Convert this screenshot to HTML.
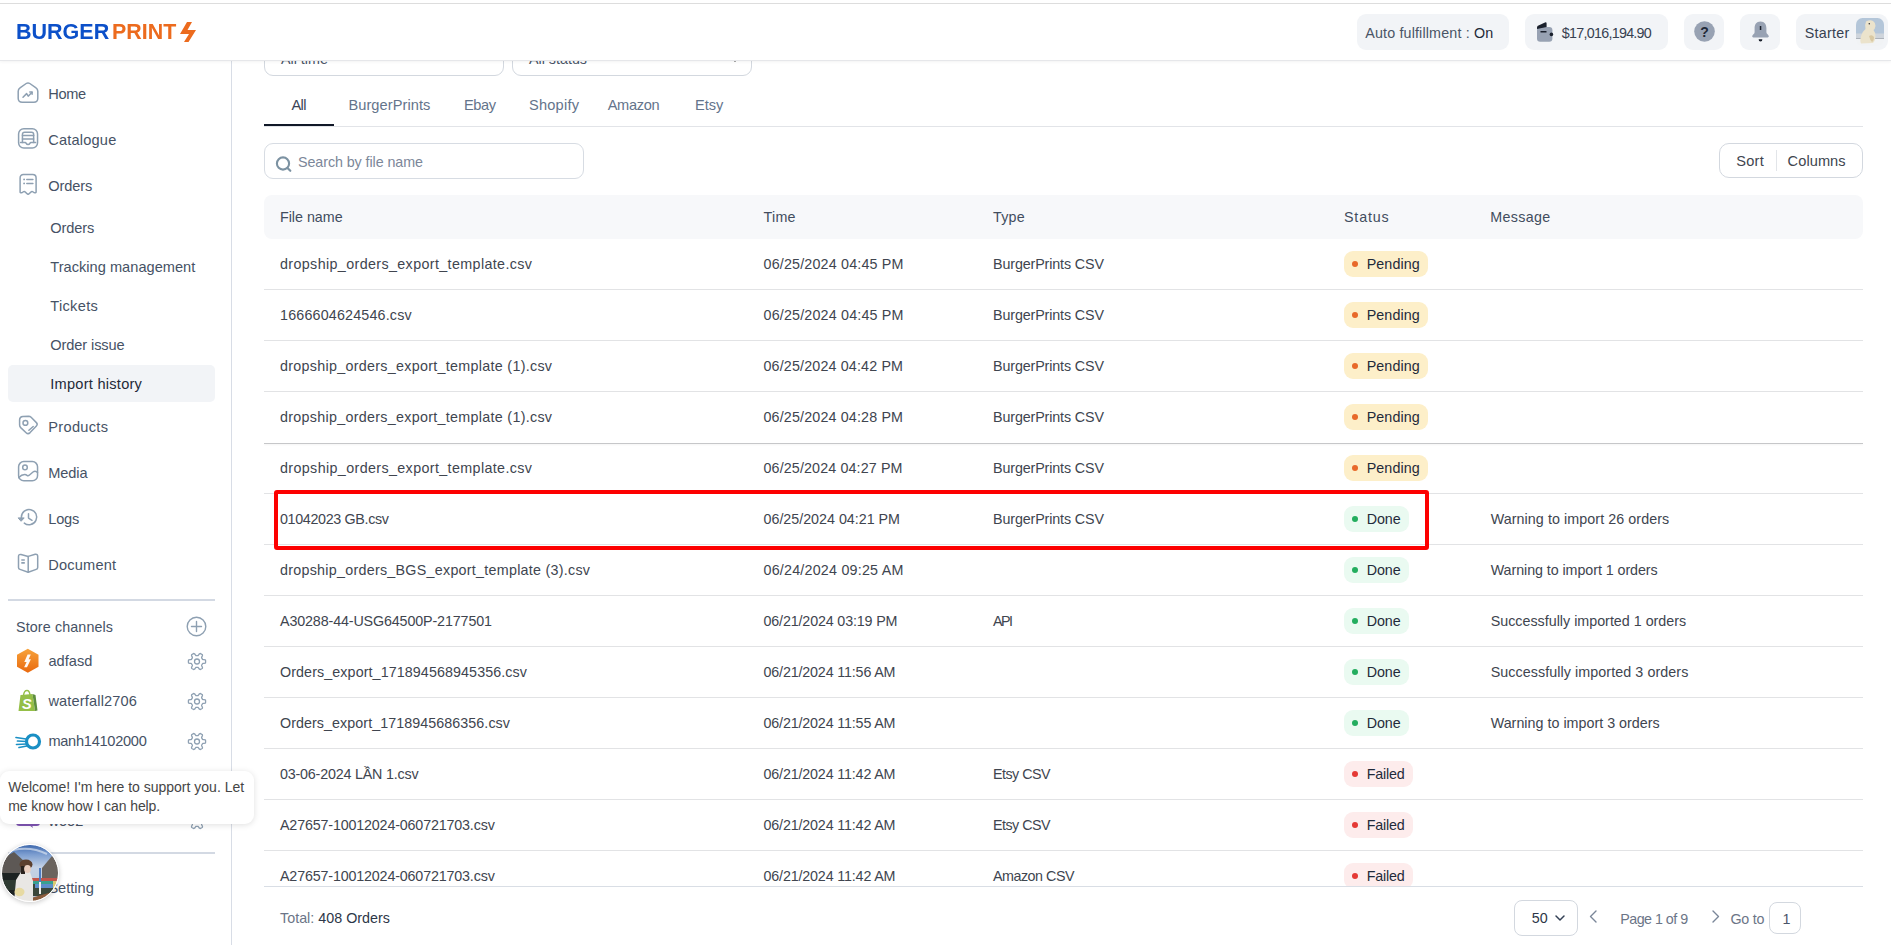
<!DOCTYPE html>
<html><head><meta charset="utf-8">
<style>
*{box-sizing:border-box;margin:0;padding:0}
html,body{width:1891px;height:945px;overflow:hidden;background:#fff;font-family:"Liberation Sans",sans-serif;font-size:14.3px;color:#334155}
.a{position:absolute;white-space:nowrap}
.t{position:absolute;white-space:nowrap;line-height:20px}
#topline{position:absolute;left:0;top:3px;width:1891px;height:1px;background:#dddddd;z-index:30}
#header{position:absolute;left:0;top:4px;width:1891px;height:57px;background:#fff;border-bottom:1px solid #e6e7ea;box-shadow:0 1px 3px rgba(0,0,0,0.05);z-index:10}
#header .t{z-index:1}
.pill{position:absolute;top:10px;height:36px;background:#f2f4f7;border-radius:9px}
#sidebar{position:absolute;left:0;top:0;width:231px;height:945px;background:#fff}
.badge{position:absolute;height:26px;border-radius:9px}
.badge i{position:absolute;left:8px;top:10px;width:6px;height:6px;border-radius:50%}
.pend{background:#fdefc9}
.pend i{background:#e8692a}
.done{background:#eafaf1}
.done i{background:#23ad5e}
.fail{background:#fdecec}
.fail i{background:#e53935}

</style></head><body>
<div id="topline"></div>
<div id="main">
<div class="a" style="left:264px;top:30px;width:240px;height:46px;border:1px solid #d3d8df;border-radius:9px"></div>
<div class="a" style="left:512px;top:30px;width:240px;height:46px;border:1px solid #d3d8df;border-radius:9px"></div>
<div class="t" style="left:281px;top:49.05px;font-size:14.3px;color:#4a5568">All time</div>
<div class="t" style="left:529px;top:49.05px;font-size:14.3px;color:#4a5568">All status</div>
<svg class="a" style="left:728px;top:52px" width="14" height="14" viewBox="0 0 14 14" fill="none" stroke="#555" stroke-width="1.5"><path d="M3 5 L7 9 L11 5"/></svg>
<div class="a" style="left:264px;top:126px;width:1599px;height:1px;background:#e2e4e8"></div>
<div class="a" style="left:264px;top:124px;width:70px;height:2px;background:#111827"></div>
<div class="t" style="left:291.4px;top:94.94px;font-size:14.6px;color:#3b4455;letter-spacing:-0.609px">All</div>
<div class="t" style="left:348.4px;top:94.94px;font-size:14.6px;color:#64748b;letter-spacing:0.081px">BurgerPrints</div>
<div class="t" style="left:464px;top:94.94px;font-size:14.6px;color:#64748b;letter-spacing:-0.422px">Ebay</div>
<div class="t" style="left:529px;top:94.94px;font-size:14.6px;color:#64748b;letter-spacing:0.219px">Shopify</div>
<div class="t" style="left:607.7px;top:94.94px;font-size:14.6px;color:#64748b;letter-spacing:-0.309px">Amazon</div>
<div class="t" style="left:695px;top:94.94px;font-size:14.6px;color:#64748b;letter-spacing:0.003px">Etsy</div>
<div class="a" style="left:264px;top:143px;width:320px;height:36px;border:1px solid #d7dce3;border-radius:9px"></div>
<svg class="a" style="left:275px;top:155px" width="18" height="18" viewBox="0 0 18 18"><circle cx="8" cy="8.5" r="6.1" fill="none" stroke="#7c92a2" stroke-width="2.1"/><path d="M12.5 13 L15.3 15.8" stroke="#7c92a2" stroke-width="2.2" stroke-linecap="round"/></svg>
<div class="t" style="left:298px;top:152.05px;font-size:14.3px;color:#7c8799;letter-spacing:-0.076px">Search by file name</div>
<div class="a" style="left:1719px;top:143px;width:144px;height:35px;border:1px solid #d3d8df;border-radius:10px"></div>
<div class="a" style="left:1776px;top:150px;width:1px;height:21px;background:#e2e5e9"></div>
<div class="t" style="left:1736.2px;top:150.94px;font-size:14.6px;color:#40454f;letter-spacing:0.278px">Sort</div>
<div class="t" style="left:1787.6px;top:150.94px;font-size:14.6px;color:#40454f;letter-spacing:0.068px">Columns</div>
<div class="a" style="left:264px;top:195px;width:1599px;height:44px;background:#f7f8fa;border-radius:8px"></div>
<div class="t" style="left:280px;top:207.05px;font-size:14.3px;color:#424d5e;letter-spacing:-0.023px">File name</div>
<div class="t" style="left:763.5px;top:207.05px;font-size:14.3px;color:#424d5e;letter-spacing:0.250px">Time</div>
<div class="t" style="left:993px;top:207.05px;font-size:14.3px;color:#424d5e;letter-spacing:0.200px">Type</div>
<div class="t" style="left:1344px;top:207.05px;font-size:14.3px;color:#424d5e;letter-spacing:0.814px">Status</div>
<div class="t" style="left:1490.2px;top:207.05px;font-size:14.3px;color:#424d5e;letter-spacing:0.331px">Message</div>
<div class="t" style="left:280px;top:254.05px;font-size:14.3px;color:#40454f;letter-spacing:0.376px">dropship_orders_export_template.csv</div>
<div class="t" style="left:763.5px;top:254.05px;font-size:14.3px;color:#40454f;letter-spacing:0.181px">06/25/2024 04:45 PM</div>
<div class="t" style="left:993px;top:254.05px;font-size:14.3px;color:#40454f;letter-spacing:-0.122px">BurgerPrints CSV</div>
<div class="badge pend" style="left:1344px;top:251px;width:84px"><i></i></div>
<div class="t" style="left:1366.7px;top:254.05px;font-size:14.3px;color:#1f2a3a;letter-spacing:0.089px">Pending</div>
<div class="a" style="left:264px;top:289px;width:1599px;height:1px;background:#e2e3e5"></div>
<div class="t" style="left:280px;top:305.05px;font-size:14.3px;color:#40454f;letter-spacing:0.181px">1666604624546.csv</div>
<div class="t" style="left:763.5px;top:305.05px;font-size:14.3px;color:#40454f;letter-spacing:0.181px">06/25/2024 04:45 PM</div>
<div class="t" style="left:993px;top:305.05px;font-size:14.3px;color:#40454f;letter-spacing:-0.122px">BurgerPrints CSV</div>
<div class="badge pend" style="left:1344px;top:302px;width:84px"><i></i></div>
<div class="t" style="left:1366.7px;top:305.05px;font-size:14.3px;color:#1f2a3a;letter-spacing:0.089px">Pending</div>
<div class="a" style="left:264px;top:340px;width:1599px;height:1px;background:#e2e3e5"></div>
<div class="t" style="left:280px;top:356.05px;font-size:14.3px;color:#40454f;letter-spacing:0.299px">dropship_orders_export_template (1).csv</div>
<div class="t" style="left:763.5px;top:356.05px;font-size:14.3px;color:#40454f;letter-spacing:0.154px">06/25/2024 04:42 PM</div>
<div class="t" style="left:993px;top:356.05px;font-size:14.3px;color:#40454f;letter-spacing:-0.122px">BurgerPrints CSV</div>
<div class="badge pend" style="left:1344px;top:353px;width:84px"><i></i></div>
<div class="t" style="left:1366.7px;top:356.05px;font-size:14.3px;color:#1f2a3a;letter-spacing:0.089px">Pending</div>
<div class="a" style="left:264px;top:391px;width:1599px;height:1px;background:#e2e3e5"></div>
<div class="t" style="left:280px;top:407.05px;font-size:14.3px;color:#40454f;letter-spacing:0.299px">dropship_orders_export_template (1).csv</div>
<div class="t" style="left:763.5px;top:407.05px;font-size:14.3px;color:#40454f;letter-spacing:0.154px">06/25/2024 04:28 PM</div>
<div class="t" style="left:993px;top:407.05px;font-size:14.3px;color:#40454f;letter-spacing:-0.122px">BurgerPrints CSV</div>
<div class="badge pend" style="left:1344px;top:404px;width:84px"><i></i></div>
<div class="t" style="left:1366.7px;top:407.05px;font-size:14.3px;color:#1f2a3a;letter-spacing:0.089px">Pending</div>
<div class="a" style="left:264px;top:443px;width:1599px;height:1px;background:#c6c7c9;box-shadow:0 1px 2px rgba(0,0,0,0.06)"></div>
<div class="t" style="left:280px;top:458.05px;font-size:14.3px;color:#40454f;letter-spacing:0.376px">dropship_orders_export_template.csv</div>
<div class="t" style="left:763.5px;top:458.05px;font-size:14.3px;color:#40454f;letter-spacing:0.126px">06/25/2024 04:27 PM</div>
<div class="t" style="left:993px;top:458.05px;font-size:14.3px;color:#40454f;letter-spacing:-0.122px">BurgerPrints CSV</div>
<div class="badge pend" style="left:1344px;top:455px;width:84px"><i></i></div>
<div class="t" style="left:1366.7px;top:458.05px;font-size:14.3px;color:#1f2a3a;letter-spacing:0.089px">Pending</div>
<div class="a" style="left:264px;top:493px;width:1599px;height:1px;background:#e2e3e5"></div>
<div class="t" style="left:280px;top:509.05px;font-size:14.3px;color:#40454f;letter-spacing:-0.333px">01042023 GB.csv</div>
<div class="t" style="left:763.5px;top:509.05px;font-size:14.3px;color:#40454f;letter-spacing:-0.013px">06/25/2024 04:21 PM</div>
<div class="t" style="left:993px;top:509.05px;font-size:14.3px;color:#40454f;letter-spacing:-0.122px">BurgerPrints CSV</div>
<div class="badge done" style="left:1344px;top:506px;width:65px"><i></i></div>
<div class="t" style="left:1366.7px;top:509.05px;font-size:14.3px;color:#1f2a3a;letter-spacing:-0.062px">Done</div>
<div class="t" style="left:1490.7px;top:509.05px;font-size:14.3px;color:#40454f;letter-spacing:0.070px">Warning to import 26 orders</div>
<div class="a" style="left:264px;top:544px;width:1599px;height:1px;background:#e2e3e5"></div>
<div class="t" style="left:280px;top:560.05px;font-size:14.3px;color:#40454f;letter-spacing:0.267px">dropship_orders_BGS_export_template (3).csv</div>
<div class="t" style="left:763.5px;top:560.05px;font-size:14.3px;color:#40454f;letter-spacing:0.215px">06/24/2024 09:25 AM</div>
<div class="badge done" style="left:1344px;top:557px;width:65px"><i></i></div>
<div class="t" style="left:1366.7px;top:560.05px;font-size:14.3px;color:#1f2a3a;letter-spacing:-0.062px">Done</div>
<div class="t" style="left:1490.7px;top:560.05px;font-size:14.3px;color:#40454f;letter-spacing:-0.069px">Warning to import 1 orders</div>
<div class="a" style="left:264px;top:595px;width:1599px;height:1px;background:#e2e3e5"></div>
<div class="t" style="left:280px;top:611.05px;font-size:14.3px;color:#40454f;letter-spacing:-0.132px">A30288-44-USG64500P-2177501</div>
<div class="t" style="left:763.5px;top:611.05px;font-size:14.3px;color:#40454f;letter-spacing:-0.152px">06/21/2024 03:19 PM</div>
<div class="t" style="left:993px;top:611.05px;font-size:14.3px;color:#40454f;letter-spacing:-1.523px">API</div>
<div class="badge done" style="left:1344px;top:608px;width:65px"><i></i></div>
<div class="t" style="left:1366.7px;top:611.05px;font-size:14.3px;color:#1f2a3a;letter-spacing:-0.062px">Done</div>
<div class="t" style="left:1490.7px;top:611.05px;font-size:14.3px;color:#40454f;letter-spacing:0.001px">Successfully imported 1 orders</div>
<div class="a" style="left:264px;top:646px;width:1599px;height:1px;background:#e2e3e5"></div>
<div class="t" style="left:280px;top:662.05px;font-size:14.3px;color:#40454f;letter-spacing:0.093px">Orders_export_171894568945356.csv</div>
<div class="t" style="left:763.5px;top:662.05px;font-size:14.3px;color:#40454f;letter-spacing:-0.160px">06/21/2024 11:56 AM</div>
<div class="badge done" style="left:1344px;top:659px;width:65px"><i></i></div>
<div class="t" style="left:1366.7px;top:662.05px;font-size:14.3px;color:#1f2a3a;letter-spacing:-0.062px">Done</div>
<div class="t" style="left:1490.7px;top:662.05px;font-size:14.3px;color:#40454f;letter-spacing:0.073px">Successfully imported 3 orders</div>
<div class="a" style="left:264px;top:697px;width:1599px;height:1px;background:#e2e3e5"></div>
<div class="t" style="left:280px;top:713.05px;font-size:14.3px;color:#40454f;letter-spacing:0.062px">Orders_export_1718945686356.csv</div>
<div class="t" style="left:763.5px;top:713.05px;font-size:14.3px;color:#40454f;letter-spacing:-0.160px">06/21/2024 11:55 AM</div>
<div class="badge done" style="left:1344px;top:710px;width:65px"><i></i></div>
<div class="t" style="left:1366.7px;top:713.05px;font-size:14.3px;color:#1f2a3a;letter-spacing:-0.062px">Done</div>
<div class="t" style="left:1490.7px;top:713.05px;font-size:14.3px;color:#40454f;letter-spacing:0.011px">Warning to import 3 orders</div>
<div class="a" style="left:264px;top:748px;width:1599px;height:1px;background:#e2e3e5"></div>
<div class="t" style="left:280px;top:764.05px;font-size:14.3px;color:#40454f;letter-spacing:-0.193px">03-06-2024 LẦN 1.csv</div>
<div class="t" style="left:763.5px;top:764.05px;font-size:14.3px;color:#40454f;letter-spacing:-0.160px">06/21/2024 11:42 AM</div>
<div class="t" style="left:993px;top:764.05px;font-size:14.3px;color:#40454f;letter-spacing:-0.512px">Etsy CSV</div>
<div class="badge fail" style="left:1344px;top:761px;width:69px"><i></i></div>
<div class="t" style="left:1366.7px;top:764.05px;font-size:14.3px;color:#1f2a3a;letter-spacing:-0.191px">Failed</div>
<div class="a" style="left:264px;top:799px;width:1599px;height:1px;background:#e2e3e5"></div>
<div class="t" style="left:280px;top:815.05px;font-size:14.3px;color:#40454f;letter-spacing:-0.165px">A27657-10012024-060721703.csv</div>
<div class="t" style="left:763.5px;top:815.05px;font-size:14.3px;color:#40454f;letter-spacing:-0.160px">06/21/2024 11:42 AM</div>
<div class="t" style="left:993px;top:815.05px;font-size:14.3px;color:#40454f;letter-spacing:-0.512px">Etsy CSV</div>
<div class="badge fail" style="left:1344px;top:812px;width:69px"><i></i></div>
<div class="t" style="left:1366.7px;top:815.05px;font-size:14.3px;color:#1f2a3a;letter-spacing:-0.191px">Failed</div>
<div class="a" style="left:264px;top:850px;width:1599px;height:1px;background:#e2e3e5"></div>
<div class="t" style="left:280px;top:866.05px;font-size:14.3px;color:#40454f;letter-spacing:-0.165px">A27657-10012024-060721703.csv</div>
<div class="t" style="left:763.5px;top:866.05px;font-size:14.3px;color:#40454f;letter-spacing:-0.160px">06/21/2024 11:42 AM</div>
<div class="t" style="left:993px;top:866.05px;font-size:14.3px;color:#40454f;letter-spacing:-0.481px">Amazon CSV</div>
<div class="badge fail" style="left:1344px;top:863px;width:69px"><i></i></div>
<div class="t" style="left:1366.7px;top:866.05px;font-size:14.3px;color:#1f2a3a;letter-spacing:-0.191px">Failed</div>
<div class="a" style="left:232px;top:887px;width:1659px;height:58px;background:#fff"></div>
<div class="a" style="left:264px;top:886px;width:1599px;height:1px;background:#d9dee5"></div>
<div class="t" style="left:280px;top:908.05px;font-size:14.3px;color:#6b7587;letter-spacing:0.020px">Total: <span style="color:#2d3748">408 Orders</span></div>
<div class="a" style="left:1514px;top:900px;width:64px;height:36px;border:1px solid #d3d8df;border-radius:8px"></div>
<div class="t" style="left:1531.7px;top:908.05px;font-size:14.3px;color:#2d3748;letter-spacing:0.094px">50</div>
<svg class="a" style="left:1554px;top:913px" width="12" height="10" viewBox="0 0 12 10" fill="none" stroke="#334155" stroke-width="1.5" stroke-linecap="round" stroke-linejoin="round"><path d="M2 3 L6 7 L10 3"/></svg>
<svg class="a" style="left:1587px;top:909px" width="12" height="16" viewBox="0 0 12 16" fill="none" stroke="#7a8699" stroke-width="1.4" stroke-linecap="round" stroke-linejoin="round"><path d="M9 2 L3.5 7.5 L9 13"/></svg>
<div class="t" style="left:1620.2px;top:908.55px;font-size:14.3px;color:#6b7587;letter-spacing:-0.514px">Page 1 of 9</div>
<svg class="a" style="left:1710px;top:909px" width="12" height="16" viewBox="0 0 12 16" fill="none" stroke="#7a8699" stroke-width="1.4" stroke-linecap="round" stroke-linejoin="round"><path d="M3 2 L8.5 7.5 L3 13"/></svg>
<div class="t" style="left:1730.4px;top:908.55px;font-size:14.3px;color:#6b7587;letter-spacing:-0.242px">Go to</div>
<div class="a" style="left:1769px;top:902px;width:32px;height:32px;border:1px solid #d3d8df;border-radius:8px"></div>
<div class="t" style="left:1782.5px;top:908.55px;font-size:14.3px;color:#4a5568">1</div>
<div class="a" style="left:274px;top:490px;width:1155px;height:60px;border:4px solid #fd0000;border-radius:3px;z-index:5"></div>
</div>
<div id="header">
<div class="a" style="left:15.5px;top:18px;height:20px;line-height:20px;font-weight:bold;font-size:22.3px;color:#0c50c9;transform-origin:0 0;transform:scaleX(0.965)">BURGER</div>
<div class="a" style="left:111.5px;top:18px;height:20px;line-height:20px;font-weight:bold;font-size:22.3px;color:#ec6b1e;transform-origin:0 0;transform:scaleX(0.96)">PRINT</div>
<svg class="a" style="left:0;top:-4px" width="200" height="60" viewBox="0 0 200 60"><polygon points="187,22 192,22 187.5,30 196,30 188.5,42 184,42 189,34 180,34" fill="#ec6b1e"/></svg>
<div class="pill" style="left:1357px;width:152px"></div>
<div class="t" style="left:1365.2px;top:19.05px;font-size:14.3px;color:#4a5466;letter-spacing:0.162px">Auto fulfillment : <span style="color:#1f2937">On</span></div>
<div class="pill" style="left:1525px;width:143px"></div>
<svg class="a" style="left:1536px;top:17px" width="19" height="22" viewBox="0 0 19 22"><rect x="1" y="6" width="15.4" height="14.8" rx="3.2" fill="#98a2b3"/><path d="M1 8 L1 6.5 Q1 4.8 3 4.2 L9 1.4 Q10.6 0.9 10.6 2.5 L10.6 6 Z" fill="#1a202c"/><rect x="4.5" y="10" width="6" height="1.5" fill="#1a202c"/><circle cx="15.4" cy="13.4" r="1.8" fill="#1a202c"/></svg>
<div class="t" style="left:1561.8px;top:19.05px;font-size:14.3px;color:#374151;letter-spacing:-0.722px">$17,016,194.90</div>
<div class="pill" style="left:1684px;width:40px"></div>
<svg class="a" style="left:1694px;top:17px" width="21" height="21" viewBox="0 0 21 21"><circle cx="10.5" cy="10.5" r="10.3" fill="#98a2b3"/><text x="10.5" y="15.5" text-anchor="middle" font-family="Liberation Sans" font-weight="bold" font-size="14" fill="#1f2937">?</text></svg>
<div class="pill" style="left:1740px;width:40px"></div>
<svg class="a" style="left:1750px;top:16px" width="21" height="24" viewBox="0 0 21 24"><path d="M10.5 1.4 C6.3 1.4 4.6 4.6 4.6 8.2 L4.6 12.2 C4.6 14 2.2 14.6 2.2 16.2 C2.2 16.9 2.7 17.4 3.4 17.4 L17.6 17.4 C18.3 17.4 18.8 16.9 18.8 16.2 C18.8 14.6 16.4 14 16.4 12.2 L16.4 8.2 C16.4 4.6 14.7 1.4 10.5 1.4 Z" fill="#98a2b3"/><rect x="9.8" y="6" width="1.5" height="4" fill="#1a202c"/><path d="M8.6 19.3 L12.4 19.3 Q12.4 21.5 10.5 21.5 Q8.6 21.5 8.6 19.3 Z" fill="#1a202c"/></svg>
<div class="pill" style="left:1796px;width:92px"></div>
<div class="t" style="left:1804.8px;top:19.05px;font-size:14.3px;color:#374151;letter-spacing:0.249px">Starter</div>
<svg class="a" style="left:1856px;top:14px" width="28" height="28" viewBox="0 0 28 28"><defs><clipPath id="avh"><rect x="0" y="0" width="28" height="28" rx="6.5"/></clipPath><filter id="bl"><feGaussianBlur stdDeviation="0.6"/></filter></defs><g clip-path="url(#avh)"><rect width="28" height="16" fill="#b4c6d9"/><rect y="15.5" width="28" height="6" fill="#cfd5dc"/><rect y="20" width="28" height="1" fill="#8a9098" opacity="0.5"/><rect y="21" width="28" height="7" fill="#f1f3f5"/><g filter="url(#bl)"><path d="M10 3.5 Q14 1.5 17 3 Q19.5 4.5 19.5 8 Q19 11 17.5 12 Q20 15 19.5 19 Q19 23 17 25 L5 25.5 Q3.5 22 5.5 17 Q7 13 9.5 11 Q8.5 7 10 3.5 Z" fill="#ebe3cc"/><path d="M13 18 Q16 16 18 19 Q18 23 16 24 Q14 22 13 18 Z" fill="#d9c9a3"/></g><circle cx="13.3" cy="5.7" r="0.8" fill="#333"/></g></svg>
</div>
<div id="sidebar">
<div class="a" style="left:231px;top:61px;width:1px;height:884px;background:#d8dde6"></div>
<svg class="a" style="left:16px;top:81px" width="24" height="23" viewBox="0 0 24 23" fill="none" stroke="#8ea0b2" stroke-width="1.5" stroke-linecap="round" stroke-linejoin="round"><path d="M2.2 10.2 Q2.2 8.1 4 6.9 L10.2 2.5 Q12 1.3 13.8 2.5 L20 6.9 Q21.8 8.1 21.8 10.2 L21.8 17.3 Q21.8 21.3 17.8 21.3 L6.2 21.3 Q2.2 21.3 2.2 17.3 Z"/><path d="M7 16.2 L10.6 12.6 L12.2 15.2 L16 11.2"/><path d="M13.8 11 L16.1 11 L16.1 13.3"/></svg><div class="t" style="left:48.3px;top:83.94px;font-size:14.6px;color:#465265;letter-spacing:-0.379px">Home</div>
<svg class="a" style="left:16px;top:127px" width="24" height="23" viewBox="0 0 24 23" fill="none" stroke="#8ea0b2" stroke-width="1.5" stroke-linecap="round" stroke-linejoin="round"><rect x="2.6" y="1.75" width="18.95" height="19.2" rx="5.2"/><path d="M6.45 15.5 V7.3 Q6.45 5.15 8.6 5.15 H15.5 Q17.65 5.15 17.65 7.3 V15.5"/><path d="M6.45 8.4 H17.65 M6.45 11.9 H17.65"/><path d="M4.5 15.5 H9.1 Q9.8 15.5 10.2 16.3 Q10.8 17.5 12.05 17.5 Q13.3 17.5 13.9 16.3 Q14.3 15.5 15 15.5 H19.6"/></svg><div class="t" style="left:48.3px;top:129.94px;font-size:14.6px;color:#465265;letter-spacing:0.182px">Catalogue</div>
<svg class="a" style="left:17px;top:173px" width="22" height="22" viewBox="0 0 22 22" fill="none" stroke="#8ea0b2" stroke-width="1.5" stroke-linecap="round" stroke-linejoin="round"><path d="M3.1 19.3 V5 Q3.1 1.6 6.5 1.6 H15.7 Q19.1 1.6 19.1 5 V19.3 Q17.6 20.3 16.2 19 Q14.9 17.9 13.7 19.2 L12.4 20.6 Q11.1 22 9.8 20.6 L8.5 19.2 Q7.3 17.9 6 19 Q4.6 20.3 3.1 19.3 Z"/><path d="M9.8 6.4 H15.9 M9.8 10.4 H15.9"/><path d="M7.1 6.4 L7.11 6.4 M7.1 10.4 L7.11 10.4" stroke-width="1.9"/></svg><div class="t" style="left:48.3px;top:175.94px;font-size:14.6px;color:#465265;letter-spacing:-0.122px">Orders</div>
<div class="t" style="left:50.3px;top:217.94px;font-size:14.6px;color:#465265;letter-spacing:-0.122px">Orders</div>
<div class="t" style="left:50.3px;top:256.94px;font-size:14.6px;color:#465265;letter-spacing:0.019px">Tracking management</div>
<div class="t" style="left:50.3px;top:295.94px;font-size:14.6px;color:#465265;letter-spacing:0.302px">Tickets</div>
<div class="t" style="left:50.3px;top:334.94px;font-size:14.6px;color:#465265;letter-spacing:-0.104px">Order issue</div>
<div class="a" style="left:8px;top:365px;width:207px;height:37px;background:#f2f4f7;border-radius:5px"></div>
<div class="t" style="left:50.3px;top:373.94px;font-size:14.6px;color:#1f2937;letter-spacing:0.246px">Import history</div>
<svg class="a" style="left:16px;top:414px" width="24" height="23" viewBox="0 0 24 23" fill="none" stroke="#8ea0b2" stroke-width="1.5" stroke-linecap="round" stroke-linejoin="round"><path d="M3.6 5.8 Q3.6 2.6 6.8 2.4 L12.6 2.2 Q14.1 2.2 15.1 3.2 L20.4 8.6 Q22 10.3 20.4 12 L14.1 18.6 Q12.1 20.6 10.1 18.7 L4.7 13.6 Q3.6 12.5 3.6 11 Z"/><circle cx="9.4" cy="8.9" r="2.4"/><path d="M12.9 16.2 L17.2 12.5"/></svg><div class="t" style="left:48.3px;top:416.94px;font-size:14.6px;color:#465265;letter-spacing:0.301px">Products</div>
<svg class="a" style="left:16px;top:460px" width="24" height="23" viewBox="0 0 24 23" fill="none" stroke="#8ea0b2" stroke-width="1.5" stroke-linecap="round" stroke-linejoin="round"><rect x="2.6" y="1.6" width="18.95" height="19.25" rx="5.2"/><circle cx="9" cy="7.4" r="2.3"/><path d="M2.8 17.6 Q5.6 14.5 8.7 14.5 Q10 14.5 11 15.3 Q12.1 16.2 13.5 15 L17 12 Q19.4 10.3 21.5 12.6"/></svg><div class="t" style="left:48.3px;top:462.94px;font-size:14.6px;color:#465265;letter-spacing:-0.113px">Media</div>
<svg class="a" style="left:16px;top:506px" width="24" height="23" viewBox="0 0 24 23" fill="none" stroke="#8ea0b2" stroke-width="1.5" stroke-linecap="round" stroke-linejoin="round"><path d="M5.4 12.3 L5.4 11.05 A7.65 7.65 0 1 1 8.3 17.1"/><path d="M2.5 11.9 L8.2 11.9 L5.35 15 Z" fill="#8ea0b2" stroke-width="1"/><path d="M12.5 7.7 L12.5 12.1 L16 14.3"/></svg><div class="t" style="left:48.3px;top:508.94px;font-size:14.6px;color:#465265;letter-spacing:-0.219px">Logs</div>
<svg class="a" style="left:16px;top:552px" width="24" height="23" viewBox="0 0 24 23" fill="none" stroke="#8ea0b2" stroke-width="1.5" stroke-linecap="round" stroke-linejoin="round"><path d="M12.2 4.4 L5 2.5 Q2.5 2 2.5 4.5 L2.5 15.4 Q2.5 17 4 17.4 L12.2 20.3 L20.2 17.4 Q21.7 17 21.7 15.4 L21.7 4.3 Q21.7 1.8 19.2 2.3 Z"/><path d="M12.2 4.4 L12.2 20.3"/><path d="M5.3 8 L8.8 8 M5.3 10.9 L8.8 10.9" stroke-width="1.7" stroke-linecap="butt"/></svg><div class="t" style="left:48.3px;top:554.94px;font-size:14.6px;color:#465265;letter-spacing:0.183px">Document</div>
<div class="a" style="left:8px;top:599px;width:207px;height:2px;background:#d3d9e3"></div>
<div class="t" style="left:16px;top:616.55px;font-size:14.3px;color:#465265;letter-spacing:0.125px">Store channels</div>
<svg class="a" style="left:185px;top:615px" width="24" height="24" viewBox="0 0 24 24" fill="none" stroke="#8ea0b2" stroke-width="1.4" stroke-linecap="round" stroke-linejoin="round"><circle cx="11.5" cy="11.5" r="9.3"/><path d="M11.5 6.5 L11.5 16.5 M6.5 11.5 L16.5 11.5"/></svg>
<svg class="a" style="left:16px;top:648px" width="24" height="26" viewBox="0 0 24 26"><defs><linearGradient id="og" x1="0" y1="0" x2="0" y2="1"><stop offset="0" stop-color="#f7a23a"/><stop offset="1" stop-color="#e9690e"/></linearGradient></defs><path d="M11.8 0.8 L22.5 6.8 L22.5 18.8 L11.8 24.8 L1 18.8 L1 6.8 Z" fill="url(#og)"/><path d="M11.6 6.6 L14.8 6.6 L12.6 11.3 L14.9 11.3 L11 19.2 L8.1 19.2 L10.6 13.9 L8.3 13.9 Z" fill="#fff" opacity="0.95"/></svg><div class="t" style="left:48.4px;top:651.44px;font-size:14.6px;color:#465265;letter-spacing:0.034px">adfasd</div><svg class="a" style="left:184px;top:651.2px" width="26" height="21" viewBox="0 0 26 21" fill="none" stroke="#8ea0b2" stroke-width="1.3" stroke-linecap="round" stroke-linejoin="round"><path d="M21.60 10.50 L21.59 10.95 L21.55 11.40 L21.49 11.85 L20.99 12.20 L20.00 12.38 L19.02 12.46 L18.51 12.61 L18.39 12.90 L18.26 13.18 L18.11 13.45 L17.95 13.71 L17.77 13.97 L17.59 14.21 L17.71 14.74 L18.13 15.63 L18.47 16.57 L18.41 17.18 L18.05 17.46 L17.68 17.71 L17.30 17.95 L16.90 18.16 L16.50 18.36 L16.08 18.53 L15.52 18.27 L14.88 17.50 L14.32 16.69 L13.92 16.33 L13.62 16.37 L13.31 16.39 L13.00 16.40 L12.69 16.39 L12.38 16.37 L12.08 16.33 L11.68 16.69 L11.12 17.50 L10.48 18.27 L9.92 18.53 L9.50 18.36 L9.10 18.16 L8.70 17.95 L8.32 17.71 L7.95 17.46 L7.59 17.18 L7.53 16.57 L7.87 15.63 L8.29 14.74 L8.41 14.21 L8.23 13.97 L8.05 13.71 L7.89 13.45 L7.74 13.18 L7.61 12.90 L7.49 12.61 L6.98 12.46 L6.00 12.38 L5.01 12.20 L4.51 11.85 L4.45 11.40 L4.41 10.95 L4.40 10.50 L4.41 10.05 L4.45 9.60 L4.51 9.15 L5.01 8.80 L6.00 8.62 L6.98 8.54 L7.49 8.39 L7.61 8.10 L7.74 7.82 L7.89 7.55 L8.05 7.29 L8.23 7.03 L8.41 6.79 L8.29 6.26 L7.87 5.37 L7.53 4.43 L7.59 3.82 L7.95 3.54 L8.32 3.29 L8.70 3.05 L9.10 2.84 L9.50 2.64 L9.92 2.47 L10.48 2.73 L11.12 3.50 L11.68 4.31 L12.08 4.67 L12.38 4.63 L12.69 4.61 L13.00 4.60 L13.31 4.61 L13.62 4.63 L13.92 4.67 L14.32 4.31 L14.88 3.50 L15.52 2.73 L16.08 2.47 L16.50 2.64 L16.90 2.84 L17.30 3.05 L17.68 3.29 L18.05 3.54 L18.41 3.82 L18.47 4.43 L18.13 5.37 L17.71 6.26 L17.59 6.79 L17.77 7.03 L17.95 7.29 L18.11 7.55 L18.26 7.82 L18.39 8.10 L18.51 8.39 L19.02 8.54 L20.00 8.62 L20.99 8.80 L21.49 9.15 L21.55 9.60 L21.59 10.05 Z"/><circle cx="13" cy="10.5" r="2.5"/></svg>
<svg class="a" style="left:16px;top:689px" width="24" height="24" viewBox="0 0 24 24"><path d="M4.5 6 L16.5 5 L19 22 L2.5 22 Z" fill="#95bf47"/><path d="M16.5 5 L19.5 6 L21.5 21.5 L19 22 Z" fill="#5e8e3e"/><path d="M7.5 6.5 Q8 1.5 11 1.5 Q13.5 1.5 14 6" fill="none" stroke="#95bf47" stroke-width="1.4"/><text x="10.8" y="19.5" text-anchor="middle" font-family="Liberation Sans" font-weight="bold" font-style="italic" font-size="14.5" fill="#fff">S</text></svg><div class="t" style="left:48.4px;top:691.44px;font-size:14.6px;color:#465265;letter-spacing:0.149px">waterfall2706</div><svg class="a" style="left:184px;top:691.2px" width="26" height="21" viewBox="0 0 26 21" fill="none" stroke="#8ea0b2" stroke-width="1.3" stroke-linecap="round" stroke-linejoin="round"><path d="M21.60 10.50 L21.59 10.95 L21.55 11.40 L21.49 11.85 L20.99 12.20 L20.00 12.38 L19.02 12.46 L18.51 12.61 L18.39 12.90 L18.26 13.18 L18.11 13.45 L17.95 13.71 L17.77 13.97 L17.59 14.21 L17.71 14.74 L18.13 15.63 L18.47 16.57 L18.41 17.18 L18.05 17.46 L17.68 17.71 L17.30 17.95 L16.90 18.16 L16.50 18.36 L16.08 18.53 L15.52 18.27 L14.88 17.50 L14.32 16.69 L13.92 16.33 L13.62 16.37 L13.31 16.39 L13.00 16.40 L12.69 16.39 L12.38 16.37 L12.08 16.33 L11.68 16.69 L11.12 17.50 L10.48 18.27 L9.92 18.53 L9.50 18.36 L9.10 18.16 L8.70 17.95 L8.32 17.71 L7.95 17.46 L7.59 17.18 L7.53 16.57 L7.87 15.63 L8.29 14.74 L8.41 14.21 L8.23 13.97 L8.05 13.71 L7.89 13.45 L7.74 13.18 L7.61 12.90 L7.49 12.61 L6.98 12.46 L6.00 12.38 L5.01 12.20 L4.51 11.85 L4.45 11.40 L4.41 10.95 L4.40 10.50 L4.41 10.05 L4.45 9.60 L4.51 9.15 L5.01 8.80 L6.00 8.62 L6.98 8.54 L7.49 8.39 L7.61 8.10 L7.74 7.82 L7.89 7.55 L8.05 7.29 L8.23 7.03 L8.41 6.79 L8.29 6.26 L7.87 5.37 L7.53 4.43 L7.59 3.82 L7.95 3.54 L8.32 3.29 L8.70 3.05 L9.10 2.84 L9.50 2.64 L9.92 2.47 L10.48 2.73 L11.12 3.50 L11.68 4.31 L12.08 4.67 L12.38 4.63 L12.69 4.61 L13.00 4.60 L13.31 4.61 L13.62 4.63 L13.92 4.67 L14.32 4.31 L14.88 3.50 L15.52 2.73 L16.08 2.47 L16.50 2.64 L16.90 2.84 L17.30 3.05 L17.68 3.29 L18.05 3.54 L18.41 3.82 L18.47 4.43 L18.13 5.37 L17.71 6.26 L17.59 6.79 L17.77 7.03 L17.95 7.29 L18.11 7.55 L18.26 7.82 L18.39 8.10 L18.51 8.39 L19.02 8.54 L20.00 8.62 L20.99 8.80 L21.49 9.15 L21.55 9.60 L21.59 10.05 Z"/><circle cx="13" cy="10.5" r="2.5"/></svg>
<svg class="a" style="left:14px;top:731px" width="28" height="22" viewBox="0 0 28 22"><circle cx="19" cy="10.5" r="6.5" fill="none" stroke="#1a8fc4" stroke-width="3.2"/><path d="M2 6.5 L12 8 M3.5 10 L12.5 10.5 M2.5 13.5 L12.5 13 M5 16.5 L13 15" stroke="#1a8fc4" stroke-width="1.7" stroke-linecap="round"/></svg><div class="t" style="left:48.4px;top:731.44px;font-size:14.6px;color:#465265;letter-spacing:-0.276px">manh14102000</div><svg class="a" style="left:184px;top:731.2px" width="26" height="21" viewBox="0 0 26 21" fill="none" stroke="#8ea0b2" stroke-width="1.3" stroke-linecap="round" stroke-linejoin="round"><path d="M21.60 10.50 L21.59 10.95 L21.55 11.40 L21.49 11.85 L20.99 12.20 L20.00 12.38 L19.02 12.46 L18.51 12.61 L18.39 12.90 L18.26 13.18 L18.11 13.45 L17.95 13.71 L17.77 13.97 L17.59 14.21 L17.71 14.74 L18.13 15.63 L18.47 16.57 L18.41 17.18 L18.05 17.46 L17.68 17.71 L17.30 17.95 L16.90 18.16 L16.50 18.36 L16.08 18.53 L15.52 18.27 L14.88 17.50 L14.32 16.69 L13.92 16.33 L13.62 16.37 L13.31 16.39 L13.00 16.40 L12.69 16.39 L12.38 16.37 L12.08 16.33 L11.68 16.69 L11.12 17.50 L10.48 18.27 L9.92 18.53 L9.50 18.36 L9.10 18.16 L8.70 17.95 L8.32 17.71 L7.95 17.46 L7.59 17.18 L7.53 16.57 L7.87 15.63 L8.29 14.74 L8.41 14.21 L8.23 13.97 L8.05 13.71 L7.89 13.45 L7.74 13.18 L7.61 12.90 L7.49 12.61 L6.98 12.46 L6.00 12.38 L5.01 12.20 L4.51 11.85 L4.45 11.40 L4.41 10.95 L4.40 10.50 L4.41 10.05 L4.45 9.60 L4.51 9.15 L5.01 8.80 L6.00 8.62 L6.98 8.54 L7.49 8.39 L7.61 8.10 L7.74 7.82 L7.89 7.55 L8.05 7.29 L8.23 7.03 L8.41 6.79 L8.29 6.26 L7.87 5.37 L7.53 4.43 L7.59 3.82 L7.95 3.54 L8.32 3.29 L8.70 3.05 L9.10 2.84 L9.50 2.64 L9.92 2.47 L10.48 2.73 L11.12 3.50 L11.68 4.31 L12.08 4.67 L12.38 4.63 L12.69 4.61 L13.00 4.60 L13.31 4.61 L13.62 4.63 L13.92 4.67 L14.32 4.31 L14.88 3.50 L15.52 2.73 L16.08 2.47 L16.50 2.64 L16.90 2.84 L17.30 3.05 L17.68 3.29 L18.05 3.54 L18.41 3.82 L18.47 4.43 L18.13 5.37 L17.71 6.26 L17.59 6.79 L17.77 7.03 L17.95 7.29 L18.11 7.55 L18.26 7.82 L18.39 8.10 L18.51 8.39 L19.02 8.54 L20.00 8.62 L20.99 8.80 L21.49 9.15 L21.55 9.60 L21.59 10.05 Z"/><circle cx="13" cy="10.5" r="2.5"/></svg>
<svg class="a" style="left:15px;top:812px" width="26" height="16" viewBox="0 0 26 16"><rect x="1" y="1" width="24" height="13" rx="3.5" fill="#7f54b3"/><path d="M14 13 L18 16 L17 13 Z" fill="#7f54b3"/></svg>
<div class="t" style="left:48.4px;top:810.94px;font-size:14.6px;color:#465265">woo2</div><svg class="a" style="left:184px;top:810.2px" width="26" height="21" viewBox="0 0 26 21" fill="none" stroke="#8ea0b2" stroke-width="1.3" stroke-linecap="round" stroke-linejoin="round"><path d="M21.60 10.50 L21.59 10.95 L21.55 11.40 L21.49 11.85 L20.99 12.20 L20.00 12.38 L19.02 12.46 L18.51 12.61 L18.39 12.90 L18.26 13.18 L18.11 13.45 L17.95 13.71 L17.77 13.97 L17.59 14.21 L17.71 14.74 L18.13 15.63 L18.47 16.57 L18.41 17.18 L18.05 17.46 L17.68 17.71 L17.30 17.95 L16.90 18.16 L16.50 18.36 L16.08 18.53 L15.52 18.27 L14.88 17.50 L14.32 16.69 L13.92 16.33 L13.62 16.37 L13.31 16.39 L13.00 16.40 L12.69 16.39 L12.38 16.37 L12.08 16.33 L11.68 16.69 L11.12 17.50 L10.48 18.27 L9.92 18.53 L9.50 18.36 L9.10 18.16 L8.70 17.95 L8.32 17.71 L7.95 17.46 L7.59 17.18 L7.53 16.57 L7.87 15.63 L8.29 14.74 L8.41 14.21 L8.23 13.97 L8.05 13.71 L7.89 13.45 L7.74 13.18 L7.61 12.90 L7.49 12.61 L6.98 12.46 L6.00 12.38 L5.01 12.20 L4.51 11.85 L4.45 11.40 L4.41 10.95 L4.40 10.50 L4.41 10.05 L4.45 9.60 L4.51 9.15 L5.01 8.80 L6.00 8.62 L6.98 8.54 L7.49 8.39 L7.61 8.10 L7.74 7.82 L7.89 7.55 L8.05 7.29 L8.23 7.03 L8.41 6.79 L8.29 6.26 L7.87 5.37 L7.53 4.43 L7.59 3.82 L7.95 3.54 L8.32 3.29 L8.70 3.05 L9.10 2.84 L9.50 2.64 L9.92 2.47 L10.48 2.73 L11.12 3.50 L11.68 4.31 L12.08 4.67 L12.38 4.63 L12.69 4.61 L13.00 4.60 L13.31 4.61 L13.62 4.63 L13.92 4.67 L14.32 4.31 L14.88 3.50 L15.52 2.73 L16.08 2.47 L16.50 2.64 L16.90 2.84 L17.30 3.05 L17.68 3.29 L18.05 3.54 L18.41 3.82 L18.47 4.43 L18.13 5.37 L17.71 6.26 L17.59 6.79 L17.77 7.03 L17.95 7.29 L18.11 7.55 L18.26 7.82 L18.39 8.10 L18.51 8.39 L19.02 8.54 L20.00 8.62 L20.99 8.80 L21.49 9.15 L21.55 9.60 L21.59 10.05 Z"/><circle cx="13" cy="10.5" r="2.5"/></svg>
<div class="a" style="left:8px;top:852px;width:207px;height:2px;background:#d3d9e3"></div>
<svg class="a" style="left:16px;top:877px" width="24" height="23" viewBox="0 0 24 23" fill="none" stroke="#8ea0b2" stroke-width="1.4" stroke-linecap="round" stroke-linejoin="round"><path d="M21.60 10.50 L21.59 10.95 L21.55 11.40 L21.49 11.85 L20.99 12.20 L20.00 12.38 L19.02 12.46 L18.51 12.61 L18.39 12.90 L18.26 13.18 L18.11 13.45 L17.95 13.71 L17.77 13.97 L17.59 14.21 L17.71 14.74 L18.13 15.63 L18.47 16.57 L18.41 17.18 L18.05 17.46 L17.68 17.71 L17.30 17.95 L16.90 18.16 L16.50 18.36 L16.08 18.53 L15.52 18.27 L14.88 17.50 L14.32 16.69 L13.92 16.33 L13.62 16.37 L13.31 16.39 L13.00 16.40 L12.69 16.39 L12.38 16.37 L12.08 16.33 L11.68 16.69 L11.12 17.50 L10.48 18.27 L9.92 18.53 L9.50 18.36 L9.10 18.16 L8.70 17.95 L8.32 17.71 L7.95 17.46 L7.59 17.18 L7.53 16.57 L7.87 15.63 L8.29 14.74 L8.41 14.21 L8.23 13.97 L8.05 13.71 L7.89 13.45 L7.74 13.18 L7.61 12.90 L7.49 12.61 L6.98 12.46 L6.00 12.38 L5.01 12.20 L4.51 11.85 L4.45 11.40 L4.41 10.95 L4.40 10.50 L4.41 10.05 L4.45 9.60 L4.51 9.15 L5.01 8.80 L6.00 8.62 L6.98 8.54 L7.49 8.39 L7.61 8.10 L7.74 7.82 L7.89 7.55 L8.05 7.29 L8.23 7.03 L8.41 6.79 L8.29 6.26 L7.87 5.37 L7.53 4.43 L7.59 3.82 L7.95 3.54 L8.32 3.29 L8.70 3.05 L9.10 2.84 L9.50 2.64 L9.92 2.47 L10.48 2.73 L11.12 3.50 L11.68 4.31 L12.08 4.67 L12.38 4.63 L12.69 4.61 L13.00 4.60 L13.31 4.61 L13.62 4.63 L13.92 4.67 L14.32 4.31 L14.88 3.50 L15.52 2.73 L16.08 2.47 L16.50 2.64 L16.90 2.84 L17.30 3.05 L17.68 3.29 L18.05 3.54 L18.41 3.82 L18.47 4.43 L18.13 5.37 L17.71 6.26 L17.59 6.79 L17.77 7.03 L17.95 7.29 L18.11 7.55 L18.26 7.82 L18.39 8.10 L18.51 8.39 L19.02 8.54 L20.00 8.62 L20.99 8.80 L21.49 9.15 L21.55 9.60 L21.59 10.05 Z"/><circle cx="13" cy="10.5" r="2.5"/></svg>
<div class="t" style="left:48.4px;top:877.94px;font-size:14.6px;color:#465265;letter-spacing:-0.006px">Setting</div>
<div class="a" style="left:0px;top:771px;width:254px;height:53px;background:#fff;border-radius:9px;box-shadow:0 1px 6px rgba(0,0,0,0.13);z-index:20"></div>
<div class="t" style="left:8.2px;top:777.15px;font-size:14px;color:#454545;z-index:21;letter-spacing:0.003px">Welcome! I'm here to support you. Let</div>
<div class="t" style="left:8.2px;top:795.65px;font-size:14px;color:#454545;z-index:21;letter-spacing:-0.095px">me know how I can help.</div>
<div class="a" style="left:1px;top:844px;width:58px;height:58px;border-radius:50%;z-index:22;box-shadow:0 1px 5px rgba(0,0,0,0.22);background:#fff"></div>
<svg class="a" style="left:1px;top:844px;z-index:23" width="58" height="58" viewBox="0 0 58 58"><defs><clipPath id="avc"><circle cx="29" cy="29" r="28.3"/></clipPath><linearGradient id="sky" x1="0" y1="0" x2="0" y2="1"><stop offset="0" stop-color="#3a64aa"/><stop offset="0.18" stop-color="#7b9dd0"/><stop offset="0.4" stop-color="#c4d2e6"/><stop offset="1" stop-color="#b9c6d8"/></linearGradient><filter id="avb"><feGaussianBlur stdDeviation="0.5"/></filter></defs>
<g clip-path="url(#avc)"><g filter="url(#avb)">
<rect x="0" y="0" width="58" height="58" fill="url(#sky)"/>
<path d="M12 6 Q30 2 46 10" stroke="#e8eef6" stroke-width="2" fill="none" opacity="0.6"/>
<polygon points="0,15 13,8 23,17 23,30 0,31" fill="#5d5954"/>
<rect x="0" y="29" width="21" height="29" fill="#1e2320"/>
<rect x="2" y="36" width="14" height="10" fill="#2d3a30"/>
<polygon points="41,24 51,12 58,17 58,36 41,36" fill="#6a645d"/>
<rect x="40" y="34" width="18" height="6" fill="#2b2927"/>
<rect x="30" y="40" width="24" height="12" fill="#3b463a"/>
<rect x="29" y="34" width="29" height="3" fill="#c2544c"/>
<rect x="28" y="37" width="24" height="3" fill="#39a08f"/>
<rect x="34" y="40" width="20" height="4" fill="#5d8cca"/>
<rect x="38" y="24" width="2" height="17" fill="#4f7cc2"/>
<rect x="52" y="37" width="4" height="13" fill="#d9ca74"/>
<rect x="38" y="38" width="2" height="12" fill="#f0f0f0"/>
<polygon points="30,54 58,46 58,58 30,58" fill="#8a5b3d"/>
<polygon points="13,58 15,36 20,28 29,28 32,37 32,58" fill="#e9e7e4"/>
<ellipse cx="18.5" cy="48" rx="5" ry="4.2" fill="#e7daa2"/>
<ellipse cx="25" cy="20.5" rx="6.5" ry="5" fill="#5b3f2f"/>
<rect x="20" y="22" width="4" height="8" fill="#2a201b"/>
<ellipse cx="26.5" cy="25" rx="3.4" ry="4" fill="#eacfbf"/>
</g></g>
<circle cx="29" cy="29" r="28.5" fill="none" stroke="#ffffff" stroke-width="1"/></svg>
</div>
</body></html>
